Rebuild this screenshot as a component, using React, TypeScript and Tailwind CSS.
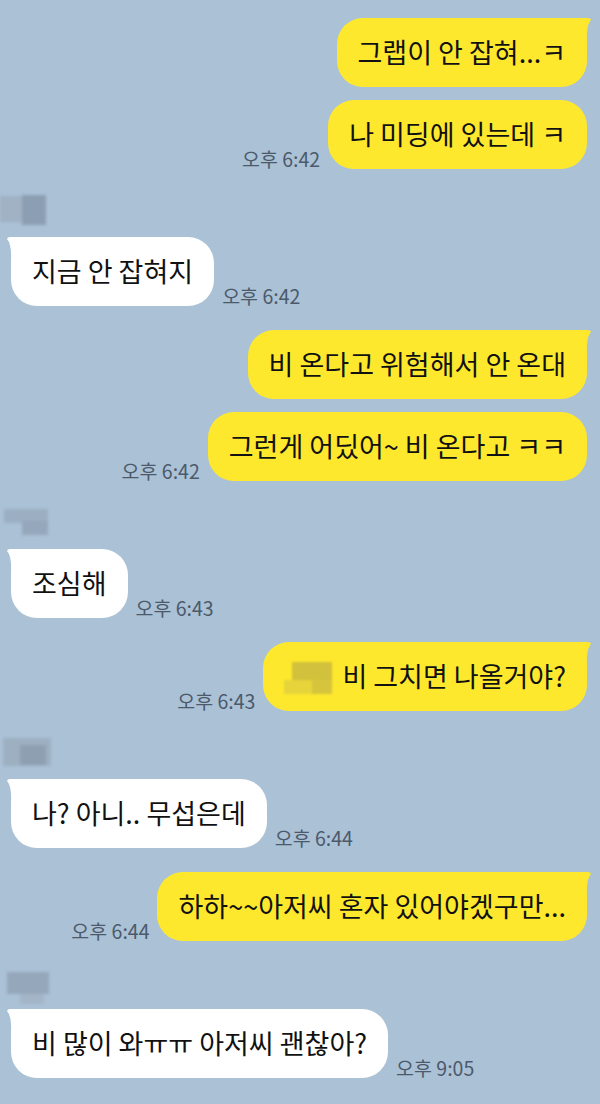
import type { ReactNode } from "react";

type Msg = { text: ReactNode; time?: string };

const font = { fontFamily: '"Noto Sans CJK KR", "Noto Sans", sans-serif' };

function Tail({ side, color }: { side: "left" | "right"; color: string }) {
  if (side === "right") {
    return (
      <svg
        className="absolute top-0 -right-[4px]"
        width="30"
        height="26"
        viewBox="0 0 30 26"
      >
        <path d="M0 0 H27 Q29.5 0 30 2 Q25 7 26 26 H0 Z" fill={color} />
      </svg>
    );
  }
  return (
    <svg
      className="absolute top-0 -left-[4px]"
      width="30"
      height="26"
      viewBox="0 0 30 26"
    >
      <path d="M30 0 H3 Q0.5 0 0 2 Q5 7 4 26 H30 Z" fill={color} />
    </svg>
  );
}

function Time({ value }: { value: string }) {
  return (
    <span className="text-[19.5px] leading-none text-[#4b5a6b] whitespace-nowrap mb-[1px]">
      {value}
    </span>
  );
}

function Bubble({
  children,
  mine,
  tail,
}: {
  children: ReactNode;
  mine: boolean;
  tail: boolean;
}) {
  const color = mine ? "#fde82e" : "#ffffff";
  return (
    <div
      className={`relative h-[69px] rounded-[26px] flex items-center pl-[21px] pr-[21px] text-[27px] text-[#111] whitespace-nowrap ${
        mine ? "bg-[#fde82e]" : "bg-white"
      }`}
    >
      {tail && <Tail side={mine ? "right" : "left"} color={color} />}
      <span className="relative">{children}</span>
    </div>
  );
}

function MineGroup({ messages }: { messages: Msg[] }) {
  return (
    <div className="flex flex-col items-end gap-[13px] pr-[13px]">
      {messages.map((m, i) => (
        <div key={i} className="flex items-end gap-[8px]">
          {m.time && <Time value={m.time} />}
          <Bubble mine tail={i === 0}>
            {m.text}
          </Bubble>
        </div>
      ))}
    </div>
  );
}

function Avatar({ variant }: { variant: number }) {
  return (
    <div className="relative h-[44px] blur-[1.5px]">
      {variant === 0 && (
        <>
          <div className="absolute left-0 top-[3px] w-[24px] h-[26px] bg-[#a0b2c4]" />
          <div className="absolute left-[22px] top-[2px] w-[24px] h-[30px] bg-[#8c9fb2]" />
        </>
      )}
      {variant === 1 && (
        <>
          <div className="absolute left-[4px] top-[4px] w-[44px] h-[14px] bg-[#9cafc2]" />
          <div className="absolute left-[22px] top-[16px] w-[26px] h-[14px] bg-[#95a8bb]" />
        </>
      )}
      {variant === 2 && (
        <>
          <div className="absolute left-[3px] top-[3px] w-[48px] h-[28px] bg-[#9db0c2]" />
          <div className="absolute left-[20px] top-[10px] w-[26px] h-[20px] bg-[#8e9fb1]" />
        </>
      )}
      {variant === 3 && (
        <>
          <div className="absolute left-[7px] top-[7px] w-[42px] h-[22px] bg-[#95a7ba]" />
          <div className="absolute left-[20px] top-[29px] w-[24px] h-[10px] bg-[#a3b5c7]" />
        </>
      )}
    </div>
  );
}

function TheirGroup({ msg, variant }: { msg: Msg; variant: number }) {
  return (
    <div className="flex flex-col pl-[11px]">
      <div className="-ml-[11px]">
        <Avatar variant={variant} />
      </div>
      <div className="flex items-end gap-[8px]">
        <Bubble mine={false} tail>
          {msg.text}
        </Bubble>
        {msg.time && <Time value={msg.time} />}
      </div>
    </div>
  );
}

function Censored() {
  return (
    <span className="inline-block align-middle relative w-[48px] h-[36px] mr-[10px] -mt-[4px] blur-[1px]">
      <span className="absolute left-[8px] top-[2px] w-[40px] h-[22px] bg-[#d2c13c]" />
      <span className="absolute left-0 top-[20px] w-[48px] h-[14px] bg-[#e6d43a]" />
      <span className="absolute left-[28px] top-[20px] w-[20px] h-[14px] bg-[#d6c53c]" />
    </span>
  );
}

export default function App() {
  return (
    <div
      className="w-[600px] h-[1104px] overflow-hidden bg-[#abc1d6] pt-[18px] flex flex-col gap-[24px]"
      style={font}
    >
      <MineGroup
        messages={[
          { text: "그랩이 안 잡혀...ㅋ" },
          { text: "나 미딩에 있는데 ㅋ", time: "오후 6:42" },
        ]}
      />
      <TheirGroup variant={0} msg={{ text: "지금 안 잡혀지", time: "오후 6:42" }} />
      <MineGroup
        messages={[
          { text: "비 온다고 위험해서 안 온대" },
          { text: "그런게 어딨어~ 비 온다고 ㅋㅋ", time: "오후 6:42" },
        ]}
      />
      <TheirGroup variant={1} msg={{ text: "조심해", time: "오후 6:43" }} />
      <MineGroup
        messages={[
          {
            text: (
              <>
                <Censored />비 그치면 나올거야?
              </>
            ),
            time: "오후 6:43",
          },
        ]}
      />
      <TheirGroup variant={2} msg={{ text: "나? 아니.. 무섭은데", time: "오후 6:44" }} />
      <MineGroup
        messages={[{ text: "하하~~아저씨 혼자 있어야겠구만...", time: "오후 6:44" }]}
      />
      <TheirGroup
        variant={3}
        msg={{ text: "비 많이 와ㅠㅠ 아저씨 괜찮아?", time: "오후 9:05" }}
      />
    </div>
  );
}
